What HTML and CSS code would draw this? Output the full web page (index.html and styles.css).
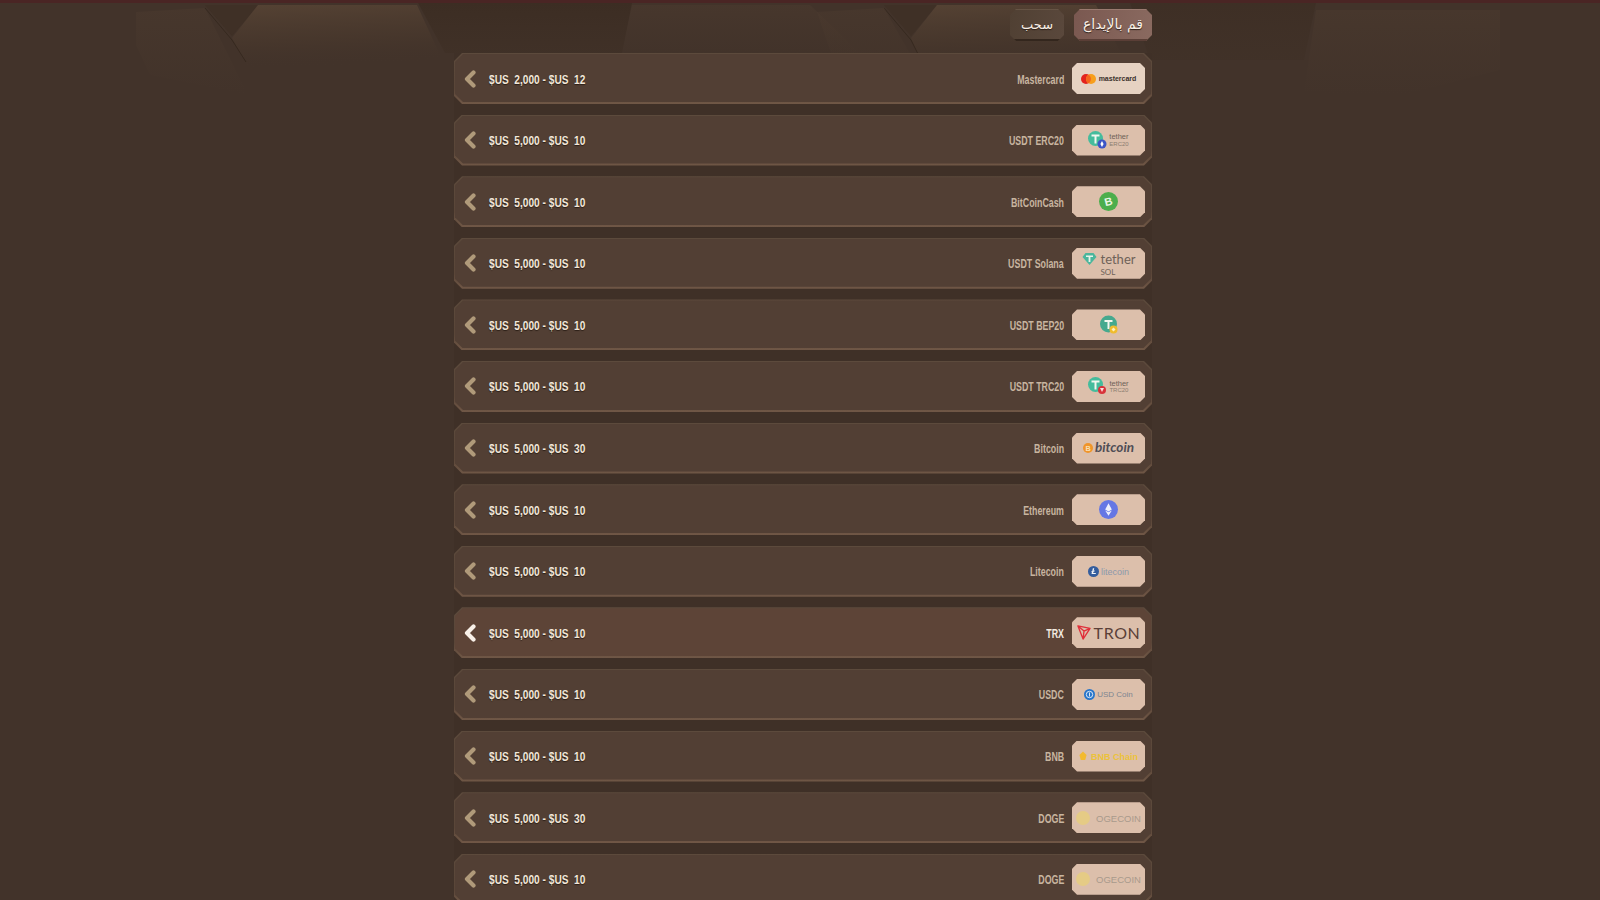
FILE: index.html
```html
<!DOCTYPE html>
<html lang="en">
<head>
<meta charset="utf-8">
<title>Payments</title>
<link rel="stylesheet" href="styles.css">
</head>
<body>
<svg class="decor" width="1600" height="110" viewBox="0 0 1600 110" aria-hidden="true">
  <defs>
    <linearGradient id="lit" x1="0" y1="0" x2="0.15" y2="1"><stop offset="0" stop-color="#5a4636" stop-opacity=".8"/><stop offset=".6" stop-color="#4a392d" stop-opacity=".55"/><stop offset="1" stop-color="#42332a" stop-opacity="0"/></linearGradient>
    <linearGradient id="dim" x1="0" y1="0" x2="0" y2="1"><stop offset="0" stop-color="#3c2d23"/><stop offset="1" stop-color="#3e2f25" stop-opacity=".6"/></linearGradient>
    <linearGradient id="soft" x1="0" y1="0" x2="0" y2="1"><stop offset="0" stop-color="#4c3b2f" stop-opacity=".5"/><stop offset="1" stop-color="#4a392e" stop-opacity="0"/></linearGradient>
  </defs>
  <path d="M418 3H632L622 53H445Z" fill="url(#dim)"/>
  <path d="M136 12L205 8L248 95L150 75L136 45Z" fill="url(#soft)"/>
  <path d="M205 5H258L232 36Z" fill="#3f3026"/>
  <path d="M258 5H417L447 70H250L232 38Z" fill="url(#lit)"/>
  <path d="M205 8L232 40L246 62" fill="none" stroke="#36291f" stroke-width="1"/>
  <path d="M632 5H810L860 53H622Z" fill="url(#soft)"/>
  <path d="M884 5H937L911 36Z" fill="#3f3026"/>
  <path d="M937 5H1096L1130 70H925L911 38Z" fill="url(#lit)"/>
  <path d="M884 8L911 40L922 62" fill="none" stroke="#36291f" stroke-width="1"/>
  <path d="M817 12L884 8L925 80H840Z" fill="url(#soft)"/>
  <path d="M1316 10H1500V70L1400 96L1304 92Z" fill="url(#soft)"/>
  <path d="M1130 3H1316L1304 60H1150Z" fill="url(#dim)" opacity=".7"/>
</svg>
<div class="topline"></div>
<main class="panel">
  <div class="tabs">
    <button class="tab">سحب</button>
    <button class="tab tab-active">قم بالإيداع</button>
  </div>
  <ul class="list">
    <li class="row"><div class="row-in">
      <svg class="chev" width="14" height="18" viewBox="0 0 14 18"><path d="M10.5 2.5L4 9l6.5 6.5"/></svg>
      <span class="range">$US&nbsp; 2,000 - $US&nbsp; 12</span><span class="name">Mastercard</span>
      <span class="badge badge-light"><svg width="15" height="10" viewBox="0 0 15 10"><circle cx="5" cy="5" r="5" fill="#e3231d"/><circle cx="10" cy="5" r="5" fill="#f79e1b"/><path d="M7.500 .7a5 5 0 0 1 0 8.600a5 5 0 0 1 0-8.600z" fill="#f5641d"/></svg><span class="lg lg-mc">mastercard</span></span>
    </div></li>
    <li class="row"><div class="row-in">
      <svg class="chev" width="14" height="18" viewBox="0 0 14 18"><path d="M10.5 2.5L4 9l6.5 6.5"/></svg>
      <span class="range">$US&nbsp; 5,000 - $US&nbsp; 10</span><span class="name">USDT ERC20</span>
      <span class="badge"><svg width="19" height="18" viewBox="0 0 19 18"><circle cx="7.500" cy="7.500" r="7.500" fill="#45bc9c"/><path d="M3.500 3.500h8v2h-3v7h-2v-7h-3z" fill="#f2f7ee"/><circle cx="14" cy="13" r="4.500" fill="#3c55c6"/><path d="M14 10l-1.600 3 1.600 3 1.600-3z" fill="#fff"/></svg><span class="lg-stack lg-tether-s">tether<small>ERC20</small></span></span>
    </div></li>
    <li class="row"><div class="row-in">
      <svg class="chev" width="14" height="18" viewBox="0 0 14 18"><path d="M10.5 2.5L4 9l6.5 6.5"/></svg>
      <span class="range">$US&nbsp; 5,000 - $US&nbsp; 10</span><span class="name">BitCoinCash</span>
      <span class="badge"><svg width="19" height="19" viewBox="0 0 19 19"><circle cx="9.500" cy="9.500" r="9.500" fill="#4cae4c"/><text x="9.500" y="13.500" text-anchor="middle" class="svg-b" transform="rotate(-14 9.500 9.500)">B</text></svg></span>
    </div></li>
    <li class="row"><div class="row-in">
      <svg class="chev" width="14" height="18" viewBox="0 0 14 18"><path d="M10.5 2.5L4 9l6.5 6.5"/></svg>
      <span class="range">$US&nbsp; 5,000 - $US&nbsp; 10</span><span class="name">USDT Solana</span>
      <span class="badge"><svg class="up" width="15" height="14" viewBox="0 0 15 14"><path d="M3.500 1h8l3 4-7 8-7-8z" fill="#4ab69c"/><path d="M4 3.500h7v1.600H8.400V10H6.600V5.100H4z" fill="#eaf3ea"/></svg><span class="lg-stack lg-tether-l">tether<small>SOL</small></span></span>
    </div></li>
    <li class="row"><div class="row-in">
      <svg class="chev" width="14" height="18" viewBox="0 0 14 18"><path d="M10.5 2.5L4 9l6.5 6.5"/></svg>
      <span class="range">$US&nbsp; 5,000 - $US&nbsp; 10</span><span class="name">USDT BEP20</span>
      <span class="badge"><svg width="20" height="20" viewBox="0 0 20 20"><circle cx="9.500" cy="9" r="8.500" fill="#45a98e"/><path d="M5.500 5h8v2h-3v7h-2V7h-3z" fill="#f2f7ee"/><circle cx="14.500" cy="14.500" r="4" fill="#f0bc2e"/><path d="M14.500 12.500l2 2-2 2-2-2z" fill="#fff2bd"/></svg></span>
    </div></li>
    <li class="row"><div class="row-in">
      <svg class="chev" width="14" height="18" viewBox="0 0 14 18"><path d="M10.5 2.5L4 9l6.500 6.500"/></svg>
      <span class="range">$US&nbsp; 5,000 - $US&nbsp; 10</span><span class="name">USDT TRC20</span>
      <span class="badge"><svg width="19" height="18" viewBox="0 0 19 18"><circle cx="7.500" cy="7.500" r="7.500" fill="#45bc9c"/><path d="M3.500 3.500h8v2h-3v7h-2v-7h-3z" fill="#f2f7ee"/><circle cx="14" cy="13" r="4" fill="#d8333a"/><path d="M12 11h4l-2 4z" fill="#fbdcdc"/></svg><span class="lg-stack lg-tether-s">tether<small>TRC20</small></span></span>
    </div></li>
    <li class="row"><div class="row-in">
      <svg class="chev" width="14" height="18" viewBox="0 0 14 18"><path d="M10.5 2.5L4 9l6.5 6.5"/></svg>
      <span class="range">$US&nbsp; 5,000 - $US&nbsp; 30</span><span class="name">Bitcoin</span>
      <span class="badge"><svg width="10" height="10" viewBox="0 0 11 11"><circle cx="5.500" cy="5.500" r="5.500" fill="#f0952a"/><text x="5.500" y="8.300" text-anchor="middle" class="svg-b2">B</text></svg><span class="lg lg-btc">bitcoin</span></span>
    </div></li>
    <li class="row"><div class="row-in">
      <svg class="chev" width="14" height="18" viewBox="0 0 14 18"><path d="M10.5 2.5L4 9l6.5 6.5"/></svg>
      <span class="range">$US&nbsp; 5,000 - $US&nbsp; 10</span><span class="name">Ethereum</span>
      <span class="badge"><svg width="19" height="19" viewBox="0 0 20 20"><circle cx="10" cy="10" r="10" fill="#6577e4"/><path d="M10 3.500L6.500 10 10 12l3.500-2zM6.500 11L10 16.500 13.500 11 10 13z" fill="#eef0fc"/></svg></span>
    </div></li>
    <li class="row"><div class="row-in">
      <svg class="chev" width="14" height="18" viewBox="0 0 14 18"><path d="M10.5 2.5L4 9l6.5 6.5"/></svg>
      <span class="range">$US&nbsp; 5,000 - $US&nbsp; 10</span><span class="name">Litecoin</span>
      <span class="badge"><svg width="11" height="11" viewBox="0 0 12 12"><circle cx="6" cy="6" r="6" fill="#345d9d"/><path d="M5.300 2.500h1.500L6.200 5.300l1.300-.4-.2.900-1.300.4-.4 1.500h3l-.2 1.100H3.800l.6-2.200-1 .3.2-.9 1-.3z" fill="#f4f6fa"/></svg><span class="lg lg-ltc">litecoin</span></span>
    </div></li>
    <li class="row row-active"><div class="row-in">
      <svg class="chev" width="14" height="18" viewBox="0 0 14 18"><path d="M10.5 2.5L4 9l6.5 6.5"/></svg>
      <span class="range">$US&nbsp; 5,000 - $US&nbsp; 10</span><span class="name">TRX</span>
      <span class="badge"><svg width="14" height="15" viewBox="0 0 15 16"><path d="M1 1l13 2.500L6.500 15zM1 1l5.500 14 1-8.500zM14 3.500L7.500 6.500" fill="none" stroke="#e02f3a" stroke-width="1.400" stroke-linejoin="round"/></svg><span class="lg lg-tron">TRON</span></span>
    </div></li>
    <li class="row"><div class="row-in">
      <svg class="chev" width="14" height="18" viewBox="0 0 14 18"><path d="M10.5 2.5L4 9l6.5 6.5"/></svg>
      <span class="range">$US&nbsp; 5,000 - $US&nbsp; 10</span><span class="name">USDC</span>
      <span class="badge"><svg width="11" height="11" viewBox="0 0 12 12"><circle cx="6" cy="6" r="6" fill="#2775ca"/><circle cx="6" cy="6" r="3.500" fill="none" stroke="#eaf2fb" stroke-width="1"/><path d="M6 3.800v4.400" stroke="#eaf2fb" stroke-width="1"/></svg><span class="lg lg-usdc">USD Coin</span></span>
    </div></li>
    <li class="row"><div class="row-in">
      <svg class="chev" width="14" height="18" viewBox="0 0 14 18"><path d="M10.5 2.5L4 9l6.5 6.5"/></svg>
      <span class="range">$US&nbsp; 5,000 - $US&nbsp; 10</span><span class="name">BNB</span>
      <span class="badge"><svg width="8" height="10" viewBox="0 0 9 11"><path d="M4.500 .5L8.500 4.500 7 10H2L.5 4.500z" fill="#f3ba2f"/></svg><span class="lg lg-bnb">BNB Chain</span></span>
    </div></li>
    <li class="row"><div class="row-in">
      <svg class="chev" width="14" height="18" viewBox="0 0 14 18"><path d="M10.5 2.5L4 9l6.5 6.5"/></svg>
      <span class="range">$US&nbsp; 5,000 - $US&nbsp; 30</span><span class="name">DOGE</span>
      <span class="badge"><svg width="14" height="14" viewBox="0 0 13 13"><circle cx="6.500" cy="6.500" r="6.500" fill="#e5cb85"/></svg><span class="lg lg-doge">OGECOIN</span></span>
    </div></li>
    <li class="row"><div class="row-in">
      <svg class="chev" width="14" height="18" viewBox="0 0 14 18"><path d="M10.5 2.5L4 9l6.5 6.5"/></svg>
      <span class="range">$US&nbsp; 5,000 - $US&nbsp; 10</span><span class="name">DOGE</span>
      <span class="badge"><svg width="14" height="14" viewBox="0 0 13 13"><circle cx="6.500" cy="6.500" r="6.500" fill="#e5cb85"/></svg><span class="lg lg-doge">OGECOIN</span></span>
    </div></li>
  </ul>
</main>
</body>
</html>
```
FILE: styles.css
```css
* { box-sizing: border-box; }
html, body { margin: 0; height: 900px; overflow: hidden; }
body { background: #42332a; font-family: "Liberation Sans", sans-serif; position: relative; }
.decor { position: absolute; left: 0; top: 0; }
.topline { position: absolute; left: 0; top: 0; width: 100%; height: 3px; background: #4a2524; }
.panel { position: relative; width: 698px; margin-left: 454px; padding-top: 9px; }
.tabs { display: flex; justify-content: flex-end; gap: 10px; height: 32px; margin-bottom: 12px; }
.tab { border: 0; padding: 0 0 2px; height: 32px; font-family: "DejaVu Sans", sans-serif; color: #f8efe6; text-shadow: 0 1px 1px #2c1f18;
  clip-path: polygon(6px 0, calc(100% - 6px) 0, 100% 6px, 100% calc(100% - 6px), calc(100% - 6px) 100%, 6px 100%, 0 calc(100% - 6px), 0 6px);
  width: 54px; background: linear-gradient(100deg, #504033, #5a483c); box-shadow: inset 0 -2px #33261d, inset 0 1px #665445; font-size: 13px; }
.tab-active { width: 78px; background: linear-gradient(100deg, #7a5850, #8a6a60); box-shadow: inset 0 -2px #5a3e36, inset 0 1px #9a7a70; font-size: 14px; }
.list { list-style: none; margin: 0; padding: 0; display: flex; flex-direction: column; gap: 10.6px; background: #3f3027; }
.row { height: 51px; padding: 1px 1px 2px; background: linear-gradient(#5c4a3c, #5a4638 70%, #705746);
  clip-path: polygon(8px 0, calc(100% - 8px) 0, 100% 8px, 100% calc(100% - 8px), calc(100% - 8px) 100%, 8px 100%, 0 calc(100% - 8px), 0 8px); }
.row-in { height: 100%; display: flex; align-items: center; padding: 1px 6px 0 8px; background: #523f34;
  clip-path: polygon(8px 0, calc(100% - 8px) 0, 100% 8px, 100% calc(100% - 8px), calc(100% - 8px) 100%, 8px 100%, 0 calc(100% - 8px), 0 8px); }
.chev { flex: none; margin-right: 12px; }
.chev path { fill: none; stroke: #b09a7a; stroke-width: 4.200; stroke-linecap: round; stroke-linejoin: round; }
.range { flex: 1; padding-top: 1px; font-size: 13px; font-weight: 700; color: #f2e7da; white-space: pre; text-shadow: 0 1px 1px #2d2018; transform: scaleX(.78); transform-origin: left center; }
.name { padding-top: 1px; font-size: 13px; font-weight: 700; color: #c8b5a0; margin-right: 8px; transform: scaleX(.68); transform-origin: right center; }
.badge { flex: none; width: 73px; height: 31px; display: flex; align-items: center; justify-content: center; gap: 2px; background: #dcbfab; color: #6a5a50;
  clip-path: polygon(5px 0, calc(100% - 5px) 0, 100% 5px, 100% calc(100% - 5px), calc(100% - 5px) 100%, 5px 100%, 0 calc(100% - 5px), 0 5px); }
.badge-light { background: #e6d2c2; }
.row-active .row-in { background: #5d4437; }
.row-active .chev path { stroke: #f8f0e8; }
.row-active .name { color: #f4ebe2; }
.lg { font-family: "Liberation Sans", sans-serif; line-height: 1; white-space: nowrap; padding-top: 2px; }
.lg small, .lg-stack small { display: block; }
.lg-mc { font-size: 7px; font-weight: 700; color: #3a2f2a; margin-left: 1px; padding-top: 0; }
.lg-stack { text-align: left; line-height: 1; white-space: nowrap; }
.lg-tether-s { font: 7.500px/1 "Liberation Sans", sans-serif; color: #6e6258; }
.lg-tether-s small { font-size: 6px; color: #8b7d70; }
.lg-tether-l { font: 13px/1.1 "Lato", sans-serif; color: #6e6258; margin-left: 2px; padding-top: 2px; }
.lg-tether-l small { font-size: 8px; line-height: 1.1; margin-top: 1px; }
.up { margin-top: -8px; }
.lg-btc { font-family: "Lato", sans-serif; font-size: 13.500px; font-weight: 700; font-style: italic; color: #4f4d55; padding-top: 0; }
.lg-ltc { font-size: 9px; color: #8b98ac; }
.lg-tron { font-family: "Lato", sans-serif; font-size: 16px; color: #5a4038; letter-spacing: .6px; padding-top: 0; margin-left: 1px; }
.lg-usdc { font-size: 8px; color: #7c8590; }
.lg-bnb { font-size: 9px; font-weight: 700; color: #ecc23a; margin-left: 2px; }
.lg-doge { font-size: 9.500px; color: #a99a8c; margin-left: 4px; }
.svg-b { font: 700 11px "Liberation Sans", sans-serif; fill: #eaf5e4; }
.svg-b2 { font: 700 8px "Liberation Sans", sans-serif; fill: #f8dfb4; }
```
